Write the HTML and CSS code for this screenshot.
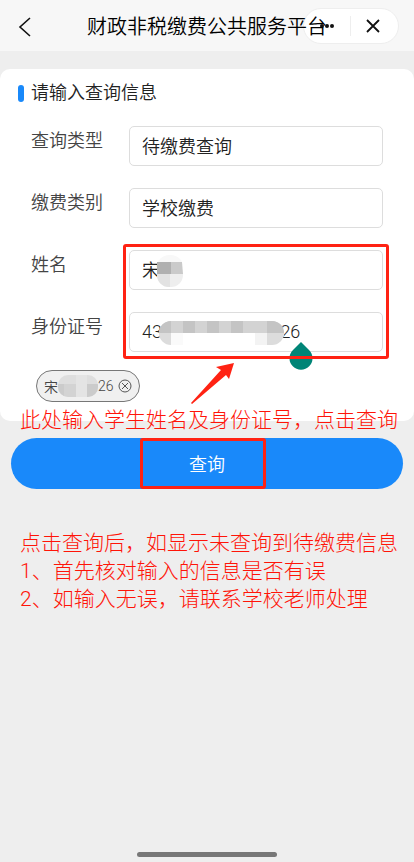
FILE: index.html
```html
<!DOCTYPE html>
<html lang="zh-CN">
<head>
  <meta charset="UTF-8">
  <meta name="viewport" content="width=device-width, initial-scale=1.0">
  <title>财政非税缴费公共服务平台</title>
  <link rel="stylesheet" href="styles.css">
</head>
<body>
  <header>
    <button type="button" class="back" aria-label="返回">
      <svg width="14" height="22" viewBox="0 0 14 22"><path d="M12 2 L2 11 L12 20" fill="none" stroke="#111" stroke-width="1.6"/></svg>
    </button>
    <div class="capsule">
      <button type="button" aria-label="更多">
        <svg width="16" height="6" viewBox="0 0 16 6" fill="#111"><circle cx="3" cy="3" r="2"/><circle cx="8" cy="3" r="2"/><circle cx="13" cy="3" r="2"/></svg>
      </button>
      <button type="button" aria-label="关闭">
        <svg width="14" height="14" viewBox="0 0 14 14"><path d="M1 1 L13 13 M13 1 L1 13" stroke="#111" stroke-width="1.8"/></svg>
      </button>
    </div>
    <h1>财政非税缴费公共服务平台</h1>
  </header>

  <form>
    <section class="card">
      <h2>请输入查询信息</h2>
      <div class="row">
        <label for="queryType">查询类型</label>
        <input id="queryType" type="text" value="待缴费查询" readonly>
      </div>
      <div class="row">
        <label for="payType">缴费类别</label>
        <input id="payType" type="text" value="学校缴费" readonly>
      </div>
      <div class="person">
        <div class="row">
          <label for="userName">姓名</label>
          <div class="field">
            <input id="userName" type="text" value="宋">
            <svg class="mask mask-name" width="26" height="32" viewBox="0 0 26 32">
              <clipPath id="clipName"><rect width="26" height="32" rx="12"/></clipPath>
              <g clip-path="url(#clipName)">
                <path d="M0 0h26v8H0z" fill="#f8f8f8"/>
                <path d="M0 19h26v13H0z" fill="#eee"/>
                <path d="M0 19h13v13H0z" fill="#e2e2e2"/>
              </g>
              <path d="M0 7h14v12H0z" fill="#b0b0b0"/>
              <path d="M14 7h11l1 12H14z" fill="#cacaca"/>
            </svg>
          </div>
        </div>
        <div class="row">
          <label for="idCard">身份证号</label>
          <div class="field">
            <input id="idCard" type="text" value="43&nbsp;&nbsp;&nbsp;&nbsp;&nbsp;&nbsp;&nbsp;&nbsp;&nbsp;&nbsp;&nbsp;&nbsp;&nbsp;&nbsp;&nbsp;&nbsp;&nbsp;&nbsp;&nbsp;&nbsp;&nbsp;&nbsp;&nbsp;&nbsp;&nbsp;&nbsp;&nbsp;26">
            <svg class="mask mask-id" width="125" height="24" viewBox="0 0 125 24">
              <clipPath id="clipId"><rect width="125" height="24" rx="12"/></clipPath>
              <g clip-path="url(#clipId)">
                <path d="M0 0h125v12H0z" fill="#d3d3d3"/>
                <path d="M0 0h12v12H0z M24 0h12v12H24z M48 0h12v12H48z M72 0h12v12H72z M108 0h17v12h-17z" fill="#c4c4c4"/>
                <path d="M0 12h125v12H0z" fill="#fff"/>
                <path d="M0 12h12v12H0z M108 12h17v12h-17z" fill="#dcdcdc"/>
                <path d="M12 12h12v12H12z" fill="#fafafa"/>
                <path d="M96 12h12v12H96z" fill="#f3f3f3"/>
              </g>
            </svg>
            <svg class="handle" width="24" height="28" viewBox="0 0 24 28"><path d="M12 0 L20 8 A11.5 11.5 0 1 1 4 8 Z" fill="#008577"/></svg>
          </div>
        </div>
        <div class="frame person-frame"></div>
        <svg class="arrow" width="44" height="42" viewBox="0 0 44 42"><path d="M43 0 L38 16 L35 12 L1 41 L0 40 L30 7 L25 4 Z" fill="#ff2213"/></svg>
      </div>
      <button type="button" class="chip">
        <span>宋</span>
        <svg width="40" height="22" viewBox="0 0 40 22">
          <clipPath id="clipChip"><rect width="40" height="22" rx="10"/></clipPath>
          <g clip-path="url(#clipChip)">
            <path d="M0 0h40v22H0z" fill="#dedede"/>
            <path d="M0 9h6v13H0z M29 9h11v13H29z" fill="#cbcbcb"/>
            <path d="M6 9h12v13H6z" fill="#d3d3d3"/>
            <path d="M18 0h11v22H18z" fill="#e4e4e4"/>
          </g>
        </svg>
        <span>26</span>
        <svg class="remove" width="14" height="14" viewBox="0 0 14 14" fill="none" stroke="#555"><circle cx="7" cy="7" r="6"/><path d="M4 4 L10 10 M10 4 L4 10"/></svg>
      </button>
      <p class="note card-note">此处输入学生姓名及身份证号，点击查询</p>
    </section>

    <div class="submit">
      <button type="submit">查询</button>
      <div class="frame submit-frame"></div>
    </div>
  </form>

  <div class="note tips">
    <p>点击查询后，如显示未查询到待缴费信息</p>
    <p>1、首先核对输入的信息是否有误</p>
    <p>2、如输入无误，请联系学校老师处理</p>
  </div>

  <div class="home-bar"></div>
</body>
</html>
```
FILE: styles.css
```css
* {
  box-sizing: border-box;
}
body {
  margin: 0;
  min-height: 100vh;
  background: #eee;
  color: #222;
  font-family: Roboto, "Noto Sans CJK SC", sans-serif;
  font-weight: 350;
}
h1, h2, p {
  margin: 0;
  font-weight: inherit;
}
button, input {
  font: inherit;
  color: inherit;
}
button {
  padding: 0;
  border: none;
  background: none;
  cursor: pointer;
}
svg {
  display: block;
}

header {
  position: relative;
  height: 51px;
  background: #f7f7f7;
  display: flex;
  align-items: center;
  justify-content: center;
}
h1 {
  position: relative;
  padding-top: 2px;
  font-size: 20px;
  line-height: 52px;
  color: #000;
  white-space: nowrap;
  pointer-events: none;
}
.back {
  position: absolute;
  left: 18px;
  top: 16px;
}
.capsule {
  position: absolute;
  right: 15px;
  top: 8px;
  width: 96px;
  height: 36px;
  display: flex;
  align-items: center;
  background: #fff;
  border: 1px solid #eee;
  border-radius: 18px;
}
.capsule button {
  flex: 1;
  height: 20px;
  display: flex;
  align-items: center;
  justify-content: center;
}
.capsule button + button {
  padding-right: 2px;
  border-left: 1px solid #eee;
}

.card {
  position: relative;
  margin-top: 18px;
  padding: 8px 31px 19px;
  background: #fff;
  border-radius: 10px;
}
h2 {
  display: flex;
  align-items: center;
  gap: 7px;
  margin: 0 0 17px -13px;
  font-size: 18px;
  line-height: 32px;
}
h2::before {
  content: "";
  width: 6px;
  height: 17px;
  border-radius: 3px;
  background: #1989fa;
}
.row {
  display: flex;
  margin-bottom: 22px;
  font-size: 18px;
}
.row label {
  flex: 0 0 98px;
  line-height: 30px;
  color: #444;
}
.row input {
  flex: 1;
  width: 100%;
  min-width: 0;
  height: 40px;
  padding: 0 12px 2px;
  border: 1px solid #ddd;
  border-radius: 5px;
  background: #fff;
  outline: none;
}
.field {
  position: relative;
  flex: 1;
}
.person {
  position: relative;
}
.person .row:nth-child(2) {
  margin-bottom: 0;
}
.mask, .handle, .arrow, .frame {
  position: absolute;
  pointer-events: none;
}
.mask-name {
  left: 28px;
  top: 5px;
}
.mask-id {
  left: 30px;
  top: 9px;
}
.handle {
  left: 160px;
  top: 30px;
}
.frame {
  border: 3px solid #ff2213;
  border-radius: 3px;
}
.person-frame {
  left: 92px;
  right: -6px;
  top: -6px;
  height: 115px;
}
.arrow {
  left: 160px;
  top: 113px;
}

.chip {
  display: flex;
  align-items: center;
  height: 32px;
  margin: 18px 0 0 5px;
  padding: 0 7px;
  border: 1px solid #777;
  border-radius: 16px;
  background: #f0f0f0;
  font-size: 14px;
  color: #444;
}
.chip .remove {
  margin-left: 4px;
}

.note {
  font-size: 21px;
  font-weight: 300;
  line-height: 28px;
  color: #ff1408;
  white-space: nowrap;
}
.card-note {
  position: absolute;
  left: 20px;
  bottom: -13px;
}
.submit {
  position: relative;
  margin: 17px 11px 0;
}
.submit button {
  display: block;
  width: 100%;
  height: 51px;
  padding-bottom: 2px;
  border-radius: 26px;
  background: #1989fa;
  color: #fff;
  font-size: 18px;
}
.submit-frame {
  left: 33%;
  top: 0;
  bottom: 0;
  width: 126px;
}
.tips {
  padding: 40px 20px;
}

.home-bar {
  position: fixed;
  left: 33%;
  right: 33%;
  bottom: 5px;
  height: 5px;
  border-radius: 3px;
  background: #777;
}
```
